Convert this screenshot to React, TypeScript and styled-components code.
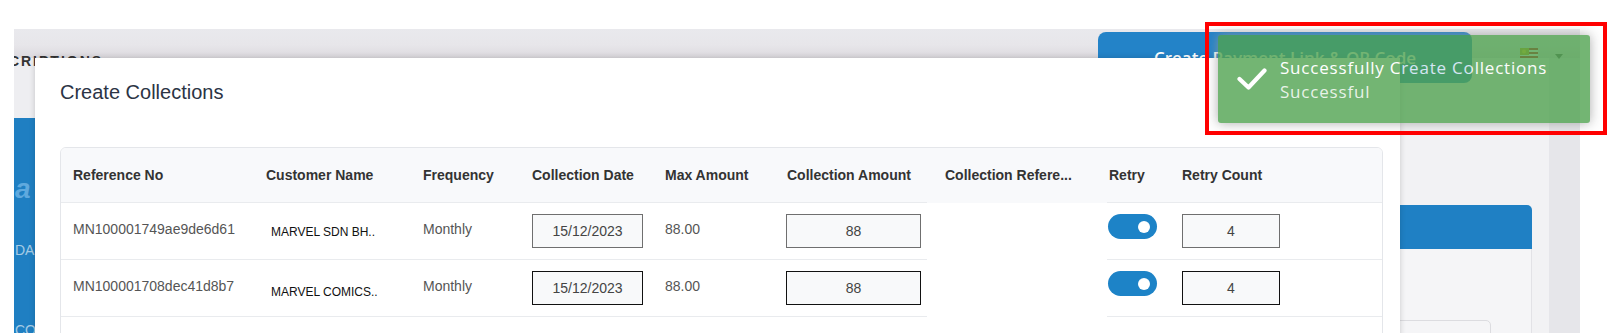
import styled, { createGlobalStyle } from "styled-components";

const GlobalStyle = createGlobalStyle`
  html, body {
    margin: 0;
    padding: 0;
    background: #ffffff;
    overflow: hidden;
    height: 333px;
  }
  * { box-sizing: border-box; }
`;

const COLS = "193px 157px 109px 133px 122px 152px 180px 63px 212px";

const rows = [
  { ref: "MN100001749ae9de6d61", name: "MARVEL SDN BH..", drop: 21, dark: false },
  { ref: "MN100001708dec41d8b7", name: "MARVEL COMICS..", drop: 24, dark: true },
];

export default function App() {
  return (
    <Screen>
      <GlobalStyle />

      <Page>
        <TopBar>
          <PageTitle>SUBSCRIPTIONS</PageTitle>
          <Spacer />
          <CreateButton>Create Payment Link &amp; QR Code</CreateButton>
          <Flag viewBox="0 0 18 12">
            <rect width="18" height="12" fill="#ffffff" />
            <rect y="0" width="18" height="2" fill="#cc0001" />
            <rect y="4" width="18" height="2" fill="#cc0001" />
            <rect y="8" width="18" height="2" fill="#cc0001" />
            <rect width="9" height="7" fill="#c9a400" />
            <circle cx="4" cy="3.5" r="2" fill="#ffcc00" />
          </Flag>
          <Caret />
        </TopBar>

        <Body>
          <Sidebar>
            <SidebarTop />
            <SidebarNav>
              <LogoMark>a</LogoMark>
              <NavItem $gap={36}>DASHBOARD</NavItem>
              <NavItem $gap={60}>COLLECTIONS</NavItem>
            </SidebarNav>
          </Sidebar>

          <Main>
            <SidePanel>
              <PanelHead />
              <PanelBody>
                <FieldBox />
              </PanelBody>
            </SidePanel>
          </Main>

          <ScrollStrip />
        </Body>
      </Page>

      <Modal>
        <ModalTitle>Create Collections</ModalTitle>
        <TableCard>
          <HeadRow>
            <HeadCell $pad={12}>Reference No</HeadCell>
            <HeadCell $pad={12}>Customer Name</HeadCell>
            <HeadCell $pad={12}>Frequency</HeadCell>
            <HeadCell $pad={12}>Collection Date</HeadCell>
            <HeadCell $pad={12}>Max Amount</HeadCell>
            <HeadCell $pad={12}>Collection Amount</HeadCell>
            <HeadCell $pad={18} $plain>Collection Refere...</HeadCell>
            <HeadCell $pad={2}>Retry</HeadCell>
            <HeadCell $pad={12}>Retry Count</HeadCell>
          </HeadRow>

          {rows.map((r) => (
            <BodyRow key={r.ref}>
              <Cell $pad={12} $top={16}>{r.ref}</Cell>
              <NameCell $pad={17} $top={r.drop}>{r.name}</NameCell>
              <Cell $pad={12} $top={16}>Monthly</Cell>
              <Cell $pad={12} $top={11}>
                <BoxInput $w={111} $dark={r.dark} value="15/12/2023" readOnly />
              </Cell>
              <Cell $pad={12} $top={16}>88.00</Cell>
              <Cell $pad={11} $top={11}>
                <BoxInput $w={135} $dark={r.dark} value="88" readOnly />
              </Cell>
              <Cell $pad={18} $top={16} $plain />
              <Cell $pad={1} $top={11}>
                <Toggle role="switch" aria-checked="true">
                  <Knob />
                </Toggle>
              </Cell>
              <Cell $pad={12} $top={11}>
                <BoxInput $w={98} $dark={r.dark} value="4" readOnly />
              </Cell>
            </BodyRow>
          ))}
          <CardFoot />
        </TableCard>
      </Modal>

      <Toast>
        <CheckIcon viewBox="0 0 30 22">
          <polyline
            points="2.5,11 11.5,19.5 27.5,2.5"
            fill="none"
            stroke="#ffffff"
            strokeWidth="4.2"
            strokeLinecap="round"
            strokeLinejoin="round"
          />
        </CheckIcon>
        <ToastText>
          <ToastTitle>Successfully Create Collections</ToastTitle>
          <ToastMessage>Successful</ToastMessage>
        </ToastText>
      </Toast>

      <Highlight />
    </Screen>
  );
}

const Screen = styled.div`
  position: relative;
  width: 1621px;
  height: 333px;
  overflow: hidden;
  padding: 29px 0 0 14px;
  background: #ffffff;
`;

/* ---------- page behind the modal ---------- */

const Page = styled.div`
  width: 1566px;
  height: 304px;
  display: flex;
  flex-direction: column;
  background: #f2f2f4;
  overflow: hidden;
`;

const TopBar = styled.div`
  position: relative;
  z-index: 1;
  height: 29px;
  flex-shrink: 0;
  display: flex;
  align-items: flex-start;
  padding-right: 17px;
  background: linear-gradient(#e9e9ed 0%, #e7e6ea 55%, #dcd9de 100%);
`;

const PageTitle = styled.div`
  margin: 24px 0 0 -52px;
  font-family: "Liberation Sans", Arial, sans-serif;
  font-size: 14px;
  font-weight: 700;
  letter-spacing: 2px;
  line-height: 16px;
  color: #333333;
  white-space: nowrap;
`;

const Spacer = styled.div`
  flex: 1;
`;

const CreateButton = styled.button`
  flex-shrink: 0;
  margin-top: 3px;
  width: 374px;
  height: 51px;
  border: none;
  border-radius: 8px;
  background: #2383c8;
  color: #ffffff;
  font-family: "Open Sans", sans-serif;
  font-size: 17px;
  font-weight: 600;
`;

const Flag = styled.svg`
  flex-shrink: 0;
  width: 18px;
  height: 12px;
  margin: 19px 0 0 48px;
`;

const Caret = styled.span`
  flex-shrink: 0;
  margin: 25px 0 0 17px;
  width: 0;
  height: 0;
  border-left: 4px solid transparent;
  border-right: 4px solid transparent;
  border-top: 5px solid #555555;
`;

const Body = styled.div`
  flex: 1;
  display: flex;
`;

const Sidebar = styled.div`
  width: 21px;
  flex-shrink: 0;
  display: flex;
  flex-direction: column;
  overflow: hidden;
`;

const SidebarTop = styled.div`
  height: 60px;
  background: #eeeef1;
`;

const SidebarNav = styled.div`
  flex: 1;
  display: flex;
  flex-direction: column;
  background: #1f7fc2;
  padding-top: 56px;
`;

const LogoMark = styled.div`
  padding-left: 1px;
  font-family: "Liberation Sans", Arial, sans-serif;
  font-size: 28px;
  font-style: italic;
  font-weight: 700;
  line-height: 30px;
  color: #5fa9de;
`;

const NavItem = styled.div<{ $gap: number }>`
  margin-top: ${({ $gap }) => $gap}px;
  padding-left: 1px;
  font-family: "Liberation Sans", Arial, sans-serif;
  font-size: 14px;
  line-height: 20px;
  color: rgba(255, 255, 255, 0.6);
  white-space: nowrap;
`;

const Main = styled.div`
  flex: 1;
  display: flex;
  justify-content: flex-end;
  align-items: flex-start;
  padding: 147px 17px 0 0;
`;

const SidePanel = styled.div`
  width: 400px;
  display: flex;
  flex-direction: column;
`;

const PanelHead = styled.div`
  height: 44px;
  background: #1f80c4;
  border-radius: 0 5px 0 0;
`;

const PanelBody = styled.div`
  height: 140px;
  padding: 71px 40px 0 0;
  background: #f5f5f7;
  border-right: 1px solid #e2e2e6;
`;

const FieldBox = styled.div`
  height: 40px;
  border: 1px solid #dcdce0;
  border-radius: 5px;
`;

const ScrollStrip = styled.div`
  width: 31px;
  flex-shrink: 0;
  background: #e6e6ea;
`;

/* ---------- modal ---------- */

const Modal = styled.div`
  position: absolute;
  z-index: 2;
  left: 35px;
  top: 58px;
  width: 1365px;
  height: 320px;
  padding: 22px 17px 0 25px;
  background: #ffffff;
  box-shadow: 0 0 6px rgba(0, 0, 0, 0.18);
`;

const ModalTitle = styled.h2`
  margin: 0;
  font-family: "Liberation Sans", Arial, sans-serif;
  font-size: 20px;
  font-weight: 400;
  line-height: 24px;
  color: #2b3445;
`;

const TableCard = styled.div`
  margin-top: 43px;
  width: 1323px;
  border: 1px solid #e4e6ea;
  border-radius: 6px;
  overflow: hidden;
  font-family: "Liberation Sans", Arial, sans-serif;
`;

const HeadRow = styled.div`
  display: grid;
  grid-template-columns: ${COLS};
  height: 55px;
  background: #f8f9fb;
`;

const HeadCell = styled.div<{ $pad: number; $plain?: boolean }>`
  display: flex;
  align-items: center;
  padding-left: ${({ $pad }) => $pad}px;
  border-bottom: 1px solid ${({ $plain }) => ($plain ? "transparent" : "#e9ebee")};
  font-size: 14px;
  font-weight: 700;
  color: #333333;
  white-space: nowrap;
  overflow: hidden;
`;

const BodyRow = styled.div`
  display: grid;
  grid-template-columns: ${COLS};
  height: 57px;
`;

const Cell = styled.div<{ $pad: number; $top: number; $plain?: boolean }>`
  padding-left: ${({ $pad }) => $pad}px;
  padding-top: ${({ $top }) => $top}px;
  border-bottom: 1px solid ${({ $plain }) => ($plain ? "transparent" : "#e9ebee")};
  font-size: 14px;
  line-height: 20px;
  color: #555555;
  white-space: nowrap;
`;

const NameCell = styled(Cell)`
  font-size: 12px;
  line-height: 16px;
  color: #111111;
`;

const BoxInput = styled.input<{ $w: number; $dark: boolean }>`
  display: block;
  width: ${({ $w }) => $w}px;
  height: 34px;
  padding: 0;
  border: 1px solid ${({ $dark }) => ($dark ? "#111111" : "#6f6f6f")};
  background: #f8f9fa;
  text-align: center;
  font-family: "Liberation Sans", Arial, sans-serif;
  font-size: 14px;
  color: #444444;
  outline: none;
`;

const Toggle = styled.span`
  display: flex;
  align-items: center;
  justify-content: flex-end;
  width: 49px;
  height: 25px;
  padding-right: 7px;
  border-radius: 13px;
  background: #1d83c7;
`;

const Knob = styled.span`
  width: 12px;
  height: 12px;
  border-radius: 50%;
  background: #ffffff;
`;

const CardFoot = styled.div`
  height: 60px;
`;

/* ---------- toast + annotation ---------- */

const Toast = styled.div`
  position: absolute;
  z-index: 3;
  left: 1218px;
  top: 35px;
  width: 372px;
  height: 88px;
  display: flex;
  align-items: center;
  padding-left: 19px;
  border-radius: 3px;
  background: #51a351;
  opacity: 0.8;
  box-shadow: 0 0 12px #999999;
  font-family: "Open Sans", sans-serif;
  color: #ffffff;
`;

const CheckIcon = styled.svg`
  width: 30px;
  height: 22px;
  flex-shrink: 0;
`;

const ToastText = styled.div`
  margin: 2px 0 0 13px;
  display: flex;
  flex-direction: column;
`;

const ToastTitle = styled.div`
  font-size: 17px;
  font-weight: 500;
  letter-spacing: 0.8px;
  line-height: 24px;
`;

const ToastMessage = styled.div`
  font-size: 17px;
  font-weight: 400;
  letter-spacing: 0.8px;
  line-height: 24px;
  color: rgba(255, 255, 255, 0.85);
`;

const Highlight = styled.div`
  position: absolute;
  z-index: 4;
  left: 1205px;
  top: 22px;
  width: 402px;
  height: 113px;
  border: 4px solid #ff0000;
  pointer-events: none;
`;
